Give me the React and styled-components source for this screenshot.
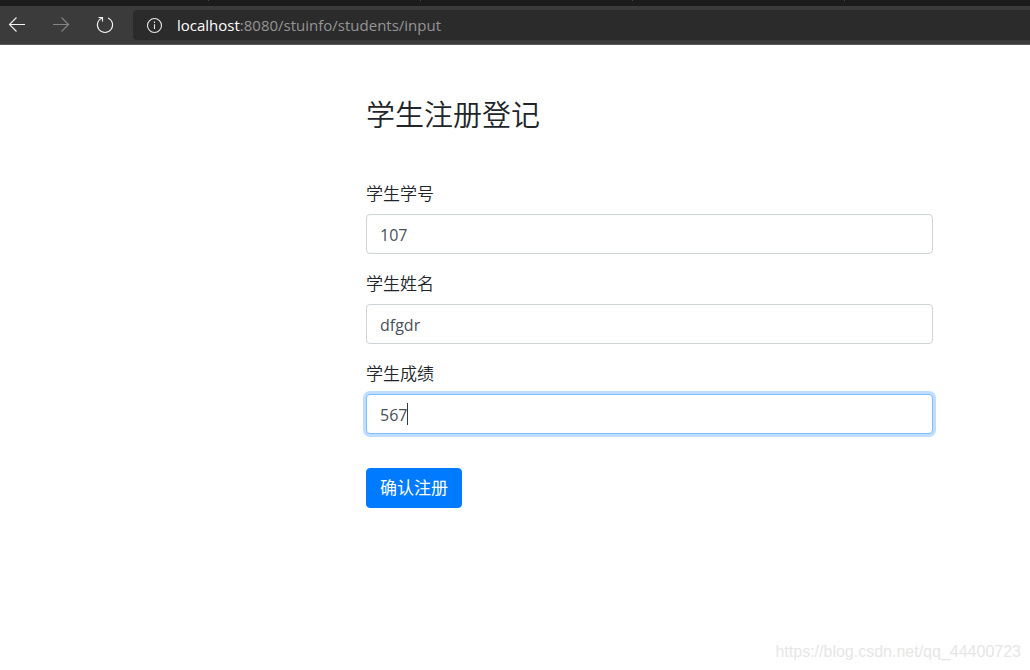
import React, { useState } from "react";
import styled, { createGlobalStyle, css } from "styled-components";

const GlobalStyle = createGlobalStyle`
  *, *::before, *::after { box-sizing: border-box; }
  html, body { margin: 0; background: #fff; }
  body, button, input {
    font-family: "Open Sans", "Noto Sans CJK SC", sans-serif;
  }
  body { color: #212529; }
`;

const Page = styled.div`
  display: flex;
  flex-direction: column;
  min-height: 100vh;
`;

const TabStrip = styled.div`
  display: flex;
  height: 6px;
  overflow: hidden;
  background: #1b1b1b;
  padding-left: 208px;
`;

const TabDivider = styled.span`
  flex: 0 0 212px;
  height: 1px;
  border-left: 1px solid #4a4a4a;
`;

const Toolbar = styled.header`
  display: flex;
  align-items: center;
  height: 39px;
  background: #3b3b3b;
  border-bottom: 1px solid #5c5c5c;
`;

const NavButtons = styled.nav`
  display: flex;
  gap: 10px;
  width: 133px;
`;

const NavButton = styled.button`
  display: flex;
  align-items: center;
  justify-content: center;
  width: 34px;
  height: 30px;
  padding: 0;
  border: 0;
  background: none;
  color: ${(p) => (p.disabled ? "#858585" : "#f2f2f2")};
`;

const Icon = styled.svg`
  display: block;
  width: ${(p) => p.$size}px;
  height: ${(p) => p.$size}px;
  fill: none;
  stroke: currentColor;
  stroke-width: 1.1;
`;

const AddressBar = styled.div`
  display: flex;
  flex: 1;
  align-items: center;
  gap: 14px;
  height: 30px;
  padding-left: 13px;
  border-radius: 4px 0 0 4px;
  background: #2b2b2b;
  color: #e8e8e8;
`;

const Url = styled.div`
  font-size: 15px;
  line-height: 30px;
  color: #959595;
  white-space: nowrap;
`;

const Host = styled.span`
  color: #fff;
`;

const Main = styled.main`
  display: grid;
  flex: 1;
  grid-template-columns: 366fr 567fr 97fr;
  align-content: start;
  padding-top: 48px;
`;

const Form = styled.form`
  grid-column: 2;
  min-width: 0;
`;

const Title = styled.h1`
  margin: 0 0 43px;
  font-size: 29px;
  line-height: 44px;
  font-weight: 350;
`;

const Field = styled.div`
  margin-bottom: 16px;
`;

const Label = styled.label`
  display: block;
  margin-bottom: 8px;
  padding-top: 2px;
  font-size: 17px;
  line-height: 24px;
  font-weight: 350;
`;

const InputWrap = styled.div`
  position: relative;
  font-size: 16px;
`;

const Input = styled.input`
  display: block;
  width: 100%;
  height: 40px;
  padding: 2px 13px 0;
  border: 1px solid #ced4da;
  border-radius: 4px;
  outline: 0;
  background: #fff;
  color: #495057;
  font-size: 16px;
  ${(p) =>
    p.$active &&
    css`
      border-color: #80bdff;
      box-shadow: 0 0 0 3px #bfdeff;
      caret-color: transparent;
    `}
`;

const Caret = styled.span`
  position: absolute;
  top: 9px;
  width: 1px;
  height: 22px;
  background: #343a40;
  pointer-events: none;
`;

const Submit = styled.button`
  display: block;
  height: 40px;
  margin-top: 34px;
  padding: 0 13px;
  border: 1px solid #007bff;
  border-radius: 4px;
  background: #007bff;
  color: #fff;
  font-size: 17px;
  line-height: 38px;
`;

const Watermark = styled.footer`
  padding: 0 9px 9px;
  text-align: right;
  font-family: "Liberation Sans", sans-serif;
  font-size: 16px;
  line-height: 18px;
  color: #e6e6e6;
`;

const fields = [
  { id: "number", label: "学生学号", value: "107" },
  { id: "name", label: "学生姓名", value: "dfgdr" },
  { id: "score", label: "学生成绩", value: "567" },
];

function TextField({ id, label, initial, active, onFocus }) {
  const [value, setValue] = useState(initial);
  return (
    <Field>
      <Label htmlFor={id}>{label}</Label>
      <InputWrap>
        <Input
          id={id}
          name={id}
          type="text"
          autoComplete="off"
          value={value}
          $active={active}
          onFocus={onFocus}
          onChange={(e) => setValue(e.target.value)}
        />
        {active && <Caret style={{ left: `calc(14px + ${value.length}ch)` }} />}
      </InputWrap>
    </Field>
  );
}

export default function App() {
  const [activeId, setActiveId] = useState("score");
  return (
    <>
      <GlobalStyle />
      <Page>
        <TabStrip>
          <TabDivider />
          <TabDivider />
          <TabDivider />
          <TabDivider />
        </TabStrip>
        <Toolbar>
          <NavButtons>
            <NavButton type="button" aria-label="后退">
              <Icon $size={18} viewBox="0 0 18 18">
                <path d="M17 8.5H1.5M8.5 1.5L1.5 8.5L8.5 15.5" />
              </Icon>
            </NavButton>
            <NavButton type="button" aria-label="前进" disabled>
              <Icon $size={18} viewBox="0 0 18 18">
                <path d="M1 8.5H16.5M9.5 1.5L16.5 8.5L9.5 15.5" />
              </Icon>
            </NavButton>
            <NavButton type="button" aria-label="刷新">
              <Icon $size={18} viewBox="0 0 18 18">
                <path d="M12 1.9A7.6 7.6 0 1 1 6 1.9M2.5 1.5H6.5V5.5" />
              </Icon>
            </NavButton>
          </NavButtons>
          <AddressBar>
            <Icon $size={17} viewBox="0 0 17 17">
              <circle cx="8.5" cy="8.5" r="7" />
              <path d="M8.5 7.2V12M8.5 4.6V6" />
            </Icon>
            <Url>
              <Host>localhost</Host>:8080/stuinfo/students/input
            </Url>
          </AddressBar>
        </Toolbar>
        <Main>
          <Form onSubmit={(e) => e.preventDefault()}>
            <Title>学生注册登记</Title>
            {fields.map((f) => (
              <TextField
                key={f.id}
                id={f.id}
                label={f.label}
                initial={f.value}
                active={activeId === f.id}
                onFocus={() => setActiveId(f.id)}
              />
            ))}
            <Submit type="submit">确认注册</Submit>
          </Form>
        </Main>
        <Watermark>https://blog.csdn.net/qq_44400723</Watermark>
      </Page>
    </>
  );
}
